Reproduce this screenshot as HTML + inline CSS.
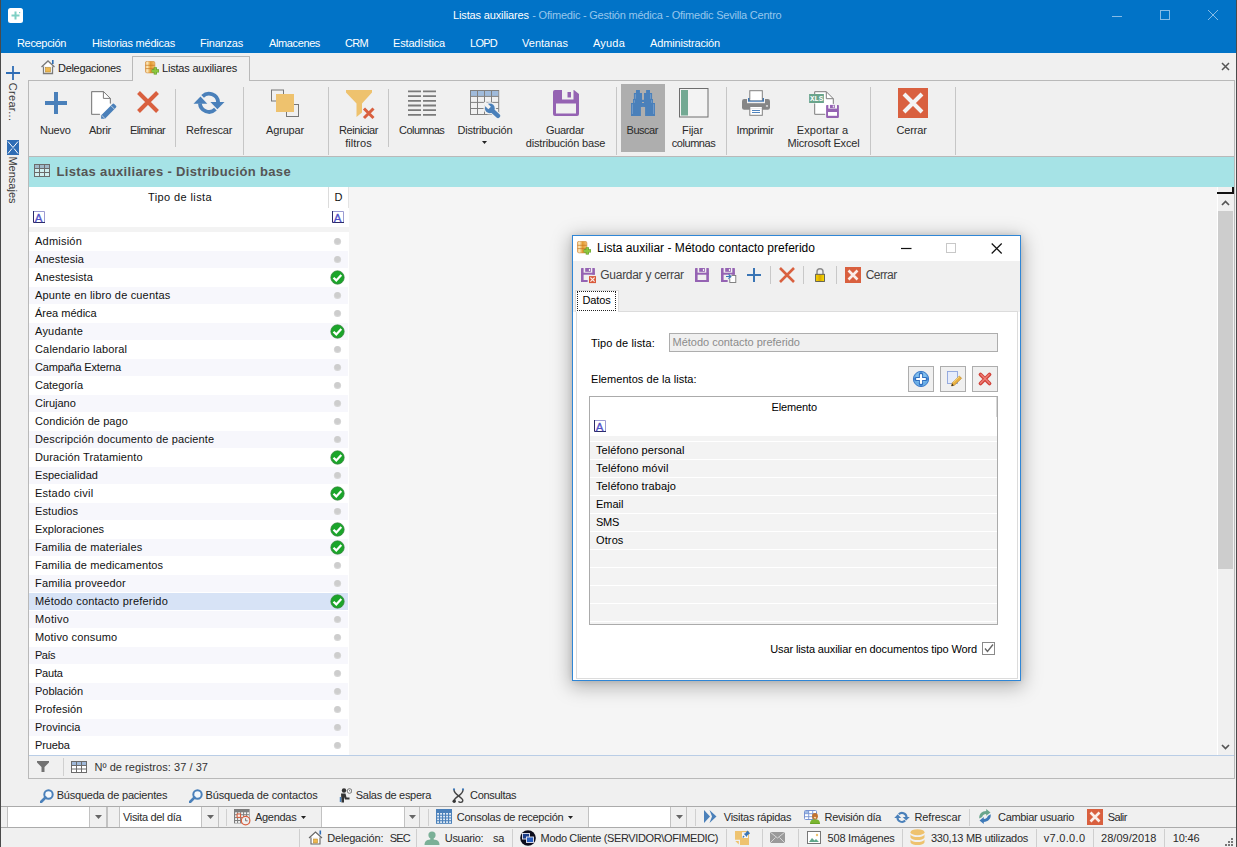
<!DOCTYPE html>
<html lang="es"><head><meta charset="utf-8"><title>Listas auxiliares - Ofimedic</title>
<style>
html,body{margin:0;padding:0}
body{width:1237px;height:847px;overflow:hidden;position:relative;background:#f0f0f0;font-family:"Liberation Sans",sans-serif;font-size:11px}
body div,body span.t,body svg{position:absolute;box-sizing:border-box}
.t{white-space:nowrap}
.dv{font-family:"DejaVu Sans","Liberation Sans",sans-serif}
.dvc{font-family:"DejaVu Sans Condensed","DejaVu Sans","Liberation Sans",sans-serif}
</style></head>
<body>
<div style="left:0px;top:0px;width:1237px;height:53px;background:#0173C7"></div>
<svg style="left:8px;top:8px;" width="15" height="15" viewBox="0 0 15 15"><rect x="0" y="0" width="15" height="15" rx="2.5" fill="#fff"/><path d="M7.500 3.500v8M3.500 7.500h8" stroke="#7fcfc4" stroke-width="2"/><rect x="11" y="4" width="1.200" height="1.200" fill="#7fcfc4"/></svg>
<span id="t1" class="t " style="top:7px;font-size:11px;color:#fff;line-height:16px;left:453px;letter-spacing:-0.145px;">Listas auxiliares</span>
<span id="t2" class="t " style="top:7px;font-size:11px;color:#96c6ec;line-height:16px;left:532.3px;letter-spacing:-0.223px;">- Ofimedic - Gestión médica - Ofimedic Sevilla Centro</span>
<svg style="left:1112px;top:10px;" width="10" height="12" viewBox="0 0 10 12"><path d="M0 6.500h10" stroke="#86bbe6" stroke-width="1"/></svg>
<svg style="left:1160px;top:10px;" width="10" height="10" viewBox="0 0 10 10"><rect x="0.500" y="0.500" width="9" height="9" fill="none" stroke="#86bbe6" stroke-width="1"/></svg>
<svg style="left:1208px;top:10px;" width="10" height="10" viewBox="0 0 10 10"><path d="M0 0l10 10M10 0l-10 10" stroke="#86bbe6" stroke-width="1"/></svg>
<span id="t3" class="t " style="top:35px;font-size:11px;color:#fff;line-height:16px;left:17px;letter-spacing:-0.332px;">Recepción</span>
<span id="t4" class="t " style="top:35px;font-size:11px;color:#fff;line-height:16px;left:92px;letter-spacing:-0.224px;">Historias médicas</span>
<span id="t5" class="t " style="top:35px;font-size:11px;color:#fff;line-height:16px;left:200px;letter-spacing:-0.205px;">Finanzas</span>
<span id="t6" class="t " style="top:35px;font-size:11px;color:#fff;line-height:16px;left:269px;letter-spacing:-0.380px;">Almacenes</span>
<span id="t7" class="t " style="top:35px;font-size:11px;color:#fff;line-height:16px;left:345px;letter-spacing:-0.688px;">CRM</span>
<span id="t8" class="t " style="top:35px;font-size:11px;color:#fff;line-height:16px;left:393px;letter-spacing:-0.165px;">Estadística</span>
<span id="t9" class="t " style="top:35px;font-size:11px;color:#fff;line-height:16px;left:470px;letter-spacing:-0.742px;">LOPD</span>
<span id="t10" class="t " style="top:35px;font-size:11px;color:#fff;line-height:16px;left:522px;letter-spacing:0.016px;">Ventanas</span>
<span id="t11" class="t " style="top:35px;font-size:11px;color:#fff;line-height:16px;left:593px;letter-spacing:0.200px;">Ayuda</span>
<span id="t12" class="t " style="top:35px;font-size:11px;color:#fff;line-height:16px;left:650px;letter-spacing:-0.153px;">Administración</span>
<div style="left:0px;top:0px;width:1px;height:847px;background:#4a4a4a"></div>
<div style="left:1236px;top:0px;width:1px;height:847px;background:#4a4a4a"></div>
<svg style="left:6px;top:66px;" width="14" height="14" viewBox="0 0 14 14"><path d="M7 0v14M0 7h14" stroke="#2f6db5" stroke-width="1.800"/></svg>
<span class="t" style="left:13px;top:101.500px;font-size:11px;color:#3a3a3a;line-height:14px;transform:translate(-50%,-50%) rotate(90deg);letter-spacing:0.3px">Crear...</span>
<svg style="left:7px;top:140px;" width="12" height="15" viewBox="0 0 12 15"><rect width="12" height="15" fill="#2f6db5"/><path d="M1 1.5l5 6 5-6M1 13.5l4-5M11 13.5l-4-5" stroke="#fff" stroke-width="1" fill="none"/></svg>
<span class="t" style="left:13px;top:180.300px;font-size:11px;color:#3a3a3a;line-height:14px;transform:translate(-50%,-50%) rotate(90deg);letter-spacing:0px">Mensajes</span>
<div style="left:28px;top:80px;width:1207px;height:76px;border:1px solid #b9b9b9;border-bottom:none;background:#f0f0f0"></div>
<div style="left:132px;top:56px;width:118px;height:25px;border:1px solid #b9b9b9;border-bottom:none;background:#f0f0f0"></div>
<svg style="left:40px;top:59px;" width="16" height="16" viewBox="0 0 16 16"><path d="M1.5 8L8 2l6.5 6M3.5 7.5v7h9v-7" fill="#fff" stroke="#7a7a7a" stroke-width="1.300"/><rect x="5.500" y="8.500" width="5" height="4.500" fill="#f0b84f" stroke="#b88a2f" stroke-width="0.6"/><rect x="12" y="1" width="1.6" height="4" fill="#2f6db5"/></svg>
<span id="t13" class="t " style="top:60px;font-size:11px;color:#222;line-height:16px;left:58px;letter-spacing:-0.305px;">Delegaciones</span>
<svg style="left:145px;top:61px;" width="15" height="14" viewBox="0 0 15 14"><defs><linearGradient id="gdb2" x1="0" x2="1" y1="0" y2="0"><stop offset="0" stop-color="#e9a04a"/><stop offset="0.180" stop-color="#fdf0c8"/><stop offset="0.550" stop-color="#e49a30"/><stop offset="1" stop-color="#f3c070"/></linearGradient></defs><rect x="0.300" y="0.300" width="9.600" height="11.600" rx="1.800" fill="url(#gdb2)" stroke="#d08a3a" stroke-width="0.600"/><path d="M0.500 4.300h9.200M0.500 7.600h9.200" stroke="#c87a28" stroke-width="0.900" opacity="0.800"/><path d="M10.300 6.200v7.400M6.600 9.900h7.400" stroke="#5e9a28" stroke-width="3.200"/><path d="M10.300 6.600v6.600M7 9.900h6.600" stroke="#8cc63e" stroke-width="2"/></svg>
<span id="t14" class="t " style="top:60px;font-size:11px;color:#222;line-height:16px;left:162px;letter-spacing:-0.192px;">Listas auxiliares</span>
<svg style="left:1221px;top:62px;" width="9" height="9" viewBox="0 0 9 9"><path d="M1 1l7 7M8 1l-7 7" stroke="#555" stroke-width="1.500"/></svg>
<div style="left:243px;top:87px;width:1px;height:68px;background:#c6c6c6"></div>
<div style="left:328px;top:87px;width:1px;height:68px;background:#c6c6c6"></div>
<div style="left:616px;top:87px;width:1px;height:68px;background:#c6c6c6"></div>
<div style="left:726px;top:87px;width:1px;height:68px;background:#c6c6c6"></div>
<div style="left:870px;top:87px;width:1px;height:68px;background:#c6c6c6"></div>
<div style="left:955px;top:87px;width:1px;height:68px;background:#c6c6c6"></div>
<div style="left:175px;top:89px;width:1px;height:58px;background:#c6c6c6"></div>
<div style="left:388px;top:89px;width:1px;height:58px;background:#c6c6c6"></div>
<svg style="left:45px;top:92px;" width="22" height="22" viewBox="0 0 22 22"><path d="M11 0v22M0 11h22" stroke="#4a80ba" stroke-width="4"/></svg>
<span id="t15" class="t " style="top:122px;font-size:11px;color:#2b2b2b;line-height:16px;left:40px;letter-spacing:-0.259px;">Nuevo</span>
<svg style="left:90px;top:90px;" width="28" height="30" viewBox="0 0 28 30"><path d="M20.300 13.500v-5.100l-6.700-6.700h-11.900v22.600h8.200" fill="#fff" stroke="#7d7d7d" stroke-width="1"/><path d="M1.700 1.700h11.900l6.700 6.700v10l-6 6h-12.600z" fill="#fff"/><path d="M20.300 13.500v-5.100l-6.700-6.700h-11.900v22.600h8.200" fill="none" stroke="#7d7d7d" stroke-width="1"/><path d="M13.400 1.700v6.700h6.900" fill="none" stroke="#7d7d7d" stroke-width="1"/><path d="M11.100 28.700l.1-3.500 11.300-11.200a1.200 1.200 0 0 1 1.700 0l1.800 1.800a1.200 1.200 0 0 1 0 1.700l-11 11.200z" fill="#4a80ba"/><path d="M11.700 25.300l3.400 3.400M21 15.700l3.400 3.400" stroke="#f0f0f0" stroke-width="0.700"/></svg>
<span id="t16" class="t " style="top:122px;font-size:11px;color:#2b2b2b;line-height:16px;left:89px;letter-spacing:-0.247px;">Abrir</span>
<svg style="left:137px;top:91px;" width="22" height="22" viewBox="0 0 22 22"><path d="M1.500 1.500l19 19M20.500 1.500l-19 19" stroke="#d9603f" stroke-width="4"/></svg>
<span id="t17" class="t " style="top:122px;font-size:11px;color:#2b2b2b;line-height:16px;left:130px;letter-spacing:-0.592px;">Eliminar</span>
<svg style="left:193px;top:90px;" width="32" height="26" viewBox="0 0 32 26"><g fill="none" stroke="#4a80ba" stroke-width="3.800"><path d="M9.600 6.400A9.100 9.100 0 0 1 25.100 12.200"/><path d="M6.900 13.400A9.100 9.100 0 0 0 22.400 19.200"/></g><path d="M0.500 13.800h13.800l-6.800-7.200z" fill="#4a80ba"/><path d="M17.400 12.100h14.100l-7.100 7.100z" fill="#4a80ba"/></svg>
<span id="t18" class="t " style="top:122px;font-size:11px;color:#2b2b2b;line-height:16px;left:186px;letter-spacing:-0.154px;">Refrescar</span>
<svg style="left:270px;top:89px;" width="30" height="29" viewBox="0 0 30 29"><rect x="1.500" y="1" width="12" height="11" fill="#f0f0f0" stroke="#777" stroke-width="1"/><rect x="16.500" y="15.500" width="12" height="12" fill="#f0f0f0" stroke="#777" stroke-width="1"/><rect x="6" y="5" width="18" height="18" fill="#eec26e"/></svg>
<span id="t19" class="t " style="top:122px;font-size:11px;color:#2b2b2b;line-height:16px;left:266px;letter-spacing:-0.163px;">Agrupar</span>
<svg style="left:345px;top:89px;" width="31" height="31" viewBox="0 0 31 31"><path d="M1 1h26v2.500l-10 11v9l-5.500 4.500v-13.500l-10.500-11z" fill="#eec26e"/><path d="M19 19.500l9.500 9.500M28.500 19.500l-9.500 9.500" stroke="#d9603f" stroke-width="3"/></svg>
<span id="t20" class="t " style="top:122px;font-size:11px;color:#2b2b2b;line-height:16px;left:358.5px;transform:translateX(-50%);letter-spacing:-0.422px;">Reiniciar</span>
<span id="t21" class="t " style="top:135px;font-size:11px;color:#2b2b2b;line-height:16px;left:358.5px;transform:translateX(-50%);letter-spacing:0.031px;">filtros</span>
<svg style="left:408px;top:90px;" width="28" height="27" viewBox="0 0 28 27"><path d="M0 1.4h13M15 1.4h13" stroke="#7a7a7a" stroke-width="1.800"/><path d="M0 6.1h13M15 6.1h13" stroke="#7a7a7a" stroke-width="1.800"/><path d="M0 10.8h13M15 10.8h13" stroke="#7a7a7a" stroke-width="1.800"/><path d="M0 15.5h13M15 15.5h13" stroke="#7a7a7a" stroke-width="1.800"/><path d="M0 20.2h13M15 20.2h13" stroke="#7a7a7a" stroke-width="1.800"/><path d="M0 24.9h13M15 24.9h13" stroke="#7a7a7a" stroke-width="1.800"/></svg>
<span id="t22" class="t " style="top:122px;font-size:11px;color:#2b2b2b;line-height:16px;left:399px;letter-spacing:-0.529px;">Columnas</span>
<svg style="left:470px;top:90px;" width="31" height="30" viewBox="0 0 31 30"><rect x="0.500" y="0.500" width="28.200" height="24" fill="#f1f1f1" stroke="#808080"/><rect x="1" y="1" width="27.200" height="5" fill="#a0bbdb"/><path d="M7.5 0.500v24" stroke="#808080" stroke-width="1"/><path d="M14.5 0.500v24" stroke="#808080" stroke-width="1"/><path d="M21.5 0.500v24" stroke="#808080" stroke-width="1"/><path d="M0.500 6.4h28.200" stroke="#808080" stroke-width="1"/><path d="M0.500 12.4h28.200" stroke="#808080" stroke-width="1"/><path d="M0.500 18.5h28.200" stroke="#808080" stroke-width="1"/><circle cx="19.800" cy="18.300" r="6.300" fill="#f1f1f1" opacity="0.900"/><path d="M20.500 19l7.500 6.800" stroke="#f1f1f1" stroke-width="6.400" stroke-linecap="round"/><circle cx="19.800" cy="18.300" r="4.900" fill="#4a80ba"/><path d="M20.500 19l7.500 6.800" stroke="#4a80ba" stroke-width="4.400" stroke-linecap="round"/><path d="M19.600 18.100l-5.500-5.500" stroke="#f1f1f1" stroke-width="3.600"/></svg>
<span id="t23" class="t " style="top:122px;font-size:11px;color:#2b2b2b;line-height:16px;left:457.5px;letter-spacing:-0.222px;">Distribución</span>
<svg style="left:482px;top:141px;" width="5" height="3" viewBox="0 0 5 3"><path d="M0 0h5l-2.500 3z" fill="#222"/></svg>
<svg style="left:553px;top:90px;" width="26" height="26" viewBox="0 0 26 26"><path d="M2 0h19l5 4v20a2 2 0 0 1-2 2h-22a2 2 0 0 1-2-2v-22a2 2 0 0 1 2-2z" fill="#9563b3"/><rect x="9" y="0" width="11.500" height="9.500" fill="#f0f0f0"/><rect x="9" y="0" width="5" height="9.500" fill="#9563b3" opacity="0"/><rect x="14.500" y="2" width="3.500" height="5.500" fill="#9563b3"/><rect x="3" y="13.500" width="20" height="10" fill="#f0f0f0"/></svg>
<span id="t24" class="t " style="top:122px;font-size:11px;color:#2b2b2b;line-height:16px;left:565px;transform:translateX(-50%);letter-spacing:-0.337px;">Guardar</span>
<span id="t25" class="t " style="top:135px;font-size:11px;color:#2b2b2b;line-height:16px;left:565.5px;transform:translateX(-50%);letter-spacing:-0.192px;">distribución base</span>
<div style="left:621px;top:84px;width:44px;height:68px;background:#aeaeae"></div>
<svg style="left:631px;top:90px;" width="24" height="26" viewBox="0 0 24 26"><g fill="#4a80ba"><path d="M5 0h3.900v3h2.100v14h-1.100v9h-9.900v-13.100h2v-3.900h.9v-6h2.100z"/><path d="M19 0h-3.900v3h-2.100v14h1.100v9h9.900v-13.100h-2v-3.900h-.9v-6h-2.100z"/><rect x="10.500" y="9.800" width="3" height="7.100"/></g><rect x="11" y="12" width="2" height="1" fill="#aeaeae"/><g stroke="#86a9d0" stroke-width="0.700"><path d="M4.400 4.200v4.600M3.400 10.200v2.600M1.400 14.200v9.800M19.600 4.200v4.600M20.600 10.200v2.600M22.600 14.200v9.800"/></g></svg>
<span id="t26" class="t " style="top:122px;font-size:11px;color:#2b2b2b;line-height:16px;left:626.5px;letter-spacing:-0.458px;">Buscar</span>
<svg style="left:679px;top:88px;" width="30" height="30" viewBox="0 0 30 30"><rect x="0.500" y="0.500" width="28.500" height="28.500" fill="#f3f3f3" stroke="#6e6e6e"/><rect x="2" y="2" width="7" height="25.500" fill="#73a993"/></svg>
<span id="t27" class="t " style="top:122px;font-size:11px;color:#2b2b2b;line-height:16px;left:692.5px;transform:translateX(-50%);letter-spacing:-0.078px;">Fijar</span>
<span id="t28" class="t " style="top:135px;font-size:11px;color:#2b2b2b;line-height:16px;left:693.5px;transform:translateX(-50%);letter-spacing:-0.460px;">columnas</span>
<svg style="left:742px;top:90px;" width="28" height="27" viewBox="0 0 28 27"><rect x="0" y="9" width="28" height="10.800" rx="2.200" fill="#868686"/><rect x="5" y="8" width="18" height="5.200" fill="#f0f0f0"/><rect x="6" y="8" width="16" height="3.700" fill="#3d76b6"/><rect x="7.800" y="0.700" width="12.500" height="9.300" fill="#fff" stroke="#808080"/><rect x="8.300" y="9" width="11.500" height="1.300" fill="#fff"/><rect x="7.800" y="17.700" width="12.500" height="7.600" fill="#fff" stroke="#808080"/><rect x="8.300" y="17" width="11.500" height="1.200" fill="#fff"/><path d="M10 20.500h8M10 22.500h8" stroke="#3d76b6" stroke-width="0.900"/><rect x="23.900" y="15.400" width="2.100" height="1.100" fill="#fff"/></svg>
<span id="t29" class="t " style="top:122px;font-size:11px;color:#2b2b2b;line-height:16px;left:736.5px;letter-spacing:-0.340px;">Imprimir</span>
<svg style="left:808px;top:89px;" width="32" height="30" viewBox="0 0 32 30"><path d="M6.700 2.700h11.600l7 7v15.600h-18.600z" fill="#fff"/><path d="M6.700 5v-2.300h11.600l7 7v5.200M6.700 14.500v10.800h10.500M18.300 2.700v7h7" fill="none" stroke="#7d7d7d"/><rect x="1.100" y="5" width="14.800" height="9" fill="#6aa58c"/><text x="8.500" y="12.300" font-size="7.600" font-weight="bold" fill="#fff" text-anchor="middle" font-family="Liberation Mono,monospace" letter-spacing="-0.2">XLS</text><rect x="18.100" y="15.900" width="12.800" height="13" rx="0.800" fill="#9563b3"/><rect x="20.300" y="15.900" width="8.700" height="3.700" fill="#f6f6f6"/><rect x="22" y="15.900" width="4.800" height="3.200" fill="#9563b3"/><rect x="24.800" y="16.500" width="1.100" height="2" fill="#f6f6f6"/><rect x="20" y="23" width="9" height="3.800" fill="#fff"/></svg>
<span id="t30" class="t " style="top:122px;font-size:11px;color:#2b2b2b;line-height:16px;left:822.5px;transform:translateX(-50%);letter-spacing:0.055px;">Exportar a</span>
<span id="t31" class="t " style="top:135px;font-size:11px;color:#2b2b2b;line-height:16px;left:823.5px;transform:translateX(-50%);letter-spacing:-0.172px;">Microsoft Excel</span>
<svg style="left:898px;top:88px;" width="30" height="30" viewBox="0 0 30 30"><rect width="30" height="30" fill="#d9603f"/><path d="M6 6l18 18M24 6l-18 18" stroke="#f4f4f4" stroke-width="4"/></svg>
<span id="t32" class="t " style="top:122px;font-size:11px;color:#2b2b2b;line-height:16px;left:896.5px;letter-spacing:-0.129px;">Cerrar</span>
<div style="left:29px;top:156px;width:1206px;height:31px;background:#a6e3e6"></div>
<div style="left:29px;top:156px;width:1206px;height:1px;background:#b9b9b9"></div>
<svg style="left:34px;top:164px;" width="16" height="13" viewBox="0 0 16 13"><rect x="0.500" y="0.500" width="15" height="12" fill="#cfeff0" stroke="#6b6b6b"/><rect x="1" y="1" width="14" height="3" fill="#9fb8c8"/><path d="M0.500 4.500h15M0.500 8.500h15M5.500 0.500v12M10.500 0.500v12" stroke="#6b6b6b" stroke-width="1"/></svg>
<span id="t33" class="t " style="top:163.5px;font-size:13px;color:#555;line-height:16px;left:56.5px;letter-spacing:0.343px;font-weight:bold">Listas auxiliares - Distribución base</span>
<div style="left:29px;top:187px;width:1206px;height:569px;background:#f5f5f5"></div>
<div style="left:29px;top:187px;width:320px;height:40px;background:#fff"></div>
<div style="left:328px;top:187px;width:1px;height:21px;background:#dcdcdc"></div>
<div style="left:348px;top:187px;width:1px;height:21px;background:#e4e4e4"></div>
<div style="left:29px;top:227px;width:320px;height:5px;background:#f3f3f3"></div>
<span id="t34" class="t " style="top:189px;font-size:11px;color:#111;line-height:16px;left:180px;transform:translateX(-50%);letter-spacing:0.392px;">Tipo de lista</span>
<span id="t35" class="t " style="top:189px;font-size:11px;color:#111;line-height:16px;left:338.5px;transform:translateX(-50%);">D</span>
<svg style="left:33px;top:211px;" width="12" height="12" viewBox="0 0 12 12"><rect x="0" y="0" width="12" height="12" fill="#fff"/><path d="M0.500 0v11.500h11.500" fill="none" stroke="#2a2a68" stroke-width="1"/><path d="M1 0.500h10.500v10.500" fill="none" stroke="#9c9cd2" stroke-width="1"/><text x="5.700" y="10.800" font-size="11.500" fill="#5050c8" stroke="#5050c8" stroke-width="0.300" text-anchor="middle" font-family="Liberation Sans,sans-serif">A</text></svg>
<svg style="left:332px;top:211px;" width="12" height="12" viewBox="0 0 12 12"><rect x="0" y="0" width="12" height="12" fill="#fff"/><path d="M0.500 0v11.500h11.500" fill="none" stroke="#2a2a68" stroke-width="1"/><path d="M1 0.500h10.500v10.500" fill="none" stroke="#9c9cd2" stroke-width="1"/><text x="5.700" y="10.800" font-size="11.500" fill="#5050c8" stroke="#5050c8" stroke-width="0.300" text-anchor="middle" font-family="Liberation Sans,sans-serif">A</text></svg>
<div style="left:29px;top:232px;width:320px;height:18px;background:#fff"></div>
<span id="t36" class="t " style="top:233px;font-size:11px;color:#111;line-height:16px;left:35px;letter-spacing:0.219px;">Admisión</span>
<svg style="left:333px;top:237px;" width="9" height="9" viewBox="0 0 9 9"><circle cx="4.500" cy="4.500" r="3.600" fill="#d6d6d6"/><circle cx="4.500" cy="4" r="2.800" fill="#cdcdcd"/></svg>
<div style="left:29px;top:250px;width:320px;height:18px;background:#fff"></div>
<div style="left:29px;top:251px;width:319px;height:17px;background:#f7f7fc"></div>
<span id="t37" class="t " style="top:251px;font-size:11px;color:#111;line-height:16px;left:35px;letter-spacing:0.076px;">Anestesia</span>
<svg style="left:333px;top:255px;" width="9" height="9" viewBox="0 0 9 9"><circle cx="4.500" cy="4.500" r="3.600" fill="#d6d6d6"/><circle cx="4.500" cy="4" r="2.800" fill="#cdcdcd"/></svg>
<div style="left:29px;top:268px;width:320px;height:18px;background:#fff"></div>
<span id="t38" class="t " style="top:269px;font-size:11px;color:#111;line-height:16px;left:35px;letter-spacing:0.102px;">Anestesista</span>
<svg style="left:330px;top:270px;" width="15" height="15" viewBox="0 0 15 15"><circle cx="7.500" cy="7.500" r="6.700" fill="#1ba52a" stroke="#3a8240" stroke-width="0.700"/><path d="M3.500 7.700l2.800 2.700 5-5.500" fill="none" stroke="#fff" stroke-width="2.200"/></svg>
<div style="left:29px;top:286px;width:320px;height:18px;background:#fff"></div>
<div style="left:29px;top:287px;width:319px;height:17px;background:#f7f7fc"></div>
<span id="t39" class="t " style="top:287px;font-size:11px;color:#111;line-height:16px;left:35px;letter-spacing:0.174px;">Apunte en libro de cuentas</span>
<svg style="left:333px;top:291px;" width="9" height="9" viewBox="0 0 9 9"><circle cx="4.500" cy="4.500" r="3.600" fill="#d6d6d6"/><circle cx="4.500" cy="4" r="2.800" fill="#cdcdcd"/></svg>
<div style="left:29px;top:304px;width:320px;height:18px;background:#fff"></div>
<span id="t40" class="t " style="top:305px;font-size:11px;color:#111;line-height:16px;left:35px;letter-spacing:-0.006px;">Área médica</span>
<svg style="left:333px;top:309px;" width="9" height="9" viewBox="0 0 9 9"><circle cx="4.500" cy="4.500" r="3.600" fill="#d6d6d6"/><circle cx="4.500" cy="4" r="2.800" fill="#cdcdcd"/></svg>
<div style="left:29px;top:322px;width:320px;height:18px;background:#fff"></div>
<div style="left:29px;top:323px;width:319px;height:17px;background:#f7f7fc"></div>
<span id="t41" class="t " style="top:323px;font-size:11px;color:#111;line-height:16px;left:35px;letter-spacing:0.238px;">Ayudante</span>
<svg style="left:330px;top:324px;" width="15" height="15" viewBox="0 0 15 15"><circle cx="7.500" cy="7.500" r="6.700" fill="#1ba52a" stroke="#3a8240" stroke-width="0.700"/><path d="M3.500 7.700l2.800 2.700 5-5.500" fill="none" stroke="#fff" stroke-width="2.200"/></svg>
<div style="left:29px;top:340px;width:320px;height:18px;background:#fff"></div>
<span id="t42" class="t " style="top:341px;font-size:11px;color:#111;line-height:16px;left:35px;letter-spacing:0.162px;">Calendario laboral</span>
<svg style="left:333px;top:345px;" width="9" height="9" viewBox="0 0 9 9"><circle cx="4.500" cy="4.500" r="3.600" fill="#d6d6d6"/><circle cx="4.500" cy="4" r="2.800" fill="#cdcdcd"/></svg>
<div style="left:29px;top:358px;width:320px;height:18px;background:#fff"></div>
<div style="left:29px;top:359px;width:319px;height:17px;background:#f7f7fc"></div>
<span id="t43" class="t " style="top:359px;font-size:11px;color:#111;line-height:16px;left:35px;letter-spacing:-0.178px;">Campaña Externa</span>
<svg style="left:333px;top:363px;" width="9" height="9" viewBox="0 0 9 9"><circle cx="4.500" cy="4.500" r="3.600" fill="#d6d6d6"/><circle cx="4.500" cy="4" r="2.800" fill="#cdcdcd"/></svg>
<div style="left:29px;top:376px;width:320px;height:18px;background:#fff"></div>
<span id="t44" class="t " style="top:377px;font-size:11px;color:#111;line-height:16px;left:35px;letter-spacing:-0.012px;">Categoría</span>
<svg style="left:333px;top:381px;" width="9" height="9" viewBox="0 0 9 9"><circle cx="4.500" cy="4.500" r="3.600" fill="#d6d6d6"/><circle cx="4.500" cy="4" r="2.800" fill="#cdcdcd"/></svg>
<div style="left:29px;top:394px;width:320px;height:18px;background:#fff"></div>
<div style="left:29px;top:395px;width:319px;height:17px;background:#f7f7fc"></div>
<span id="t45" class="t " style="top:395px;font-size:11px;color:#111;line-height:16px;left:35px;letter-spacing:-0.021px;">Cirujano</span>
<svg style="left:333px;top:399px;" width="9" height="9" viewBox="0 0 9 9"><circle cx="4.500" cy="4.500" r="3.600" fill="#d6d6d6"/><circle cx="4.500" cy="4" r="2.800" fill="#cdcdcd"/></svg>
<div style="left:29px;top:412px;width:320px;height:18px;background:#fff"></div>
<span id="t46" class="t " style="top:413px;font-size:11px;color:#111;line-height:16px;left:35px;letter-spacing:0.068px;">Condición de pago</span>
<svg style="left:333px;top:417px;" width="9" height="9" viewBox="0 0 9 9"><circle cx="4.500" cy="4.500" r="3.600" fill="#d6d6d6"/><circle cx="4.500" cy="4" r="2.800" fill="#cdcdcd"/></svg>
<div style="left:29px;top:430px;width:320px;height:18px;background:#fff"></div>
<div style="left:29px;top:431px;width:319px;height:17px;background:#f7f7fc"></div>
<span id="t47" class="t " style="top:431px;font-size:11px;color:#111;line-height:16px;left:35px;letter-spacing:0.134px;">Descripción documento de paciente</span>
<svg style="left:333px;top:435px;" width="9" height="9" viewBox="0 0 9 9"><circle cx="4.500" cy="4.500" r="3.600" fill="#d6d6d6"/><circle cx="4.500" cy="4" r="2.800" fill="#cdcdcd"/></svg>
<div style="left:29px;top:448px;width:320px;height:18px;background:#fff"></div>
<span id="t48" class="t " style="top:449px;font-size:11px;color:#111;line-height:16px;left:35px;letter-spacing:0.131px;">Duración Tratamiento</span>
<svg style="left:330px;top:450px;" width="15" height="15" viewBox="0 0 15 15"><circle cx="7.500" cy="7.500" r="6.700" fill="#1ba52a" stroke="#3a8240" stroke-width="0.700"/><path d="M3.500 7.700l2.800 2.700 5-5.500" fill="none" stroke="#fff" stroke-width="2.200"/></svg>
<div style="left:29px;top:466px;width:320px;height:18px;background:#fff"></div>
<div style="left:29px;top:467px;width:319px;height:17px;background:#f7f7fc"></div>
<span id="t49" class="t " style="top:467px;font-size:11px;color:#111;line-height:16px;left:35px;letter-spacing:0.052px;">Especialidad</span>
<svg style="left:333px;top:471px;" width="9" height="9" viewBox="0 0 9 9"><circle cx="4.500" cy="4.500" r="3.600" fill="#d6d6d6"/><circle cx="4.500" cy="4" r="2.800" fill="#cdcdcd"/></svg>
<div style="left:29px;top:484px;width:320px;height:18px;background:#fff"></div>
<span id="t50" class="t " style="top:485px;font-size:11px;color:#111;line-height:16px;left:35px;letter-spacing:0.222px;">Estado civil</span>
<svg style="left:330px;top:486px;" width="15" height="15" viewBox="0 0 15 15"><circle cx="7.500" cy="7.500" r="6.700" fill="#1ba52a" stroke="#3a8240" stroke-width="0.700"/><path d="M3.500 7.700l2.800 2.700 5-5.500" fill="none" stroke="#fff" stroke-width="2.200"/></svg>
<div style="left:29px;top:502px;width:320px;height:18px;background:#fff"></div>
<div style="left:29px;top:503px;width:319px;height:17px;background:#f7f7fc"></div>
<span id="t51" class="t " style="top:503px;font-size:11px;color:#111;line-height:16px;left:35px;letter-spacing:0.125px;">Estudios</span>
<svg style="left:333px;top:507px;" width="9" height="9" viewBox="0 0 9 9"><circle cx="4.500" cy="4.500" r="3.600" fill="#d6d6d6"/><circle cx="4.500" cy="4" r="2.800" fill="#cdcdcd"/></svg>
<div style="left:29px;top:520px;width:320px;height:18px;background:#fff"></div>
<span id="t52" class="t " style="top:521px;font-size:11px;color:#111;line-height:16px;left:35px;letter-spacing:-0.007px;">Exploraciones</span>
<svg style="left:330px;top:522px;" width="15" height="15" viewBox="0 0 15 15"><circle cx="7.500" cy="7.500" r="6.700" fill="#1ba52a" stroke="#3a8240" stroke-width="0.700"/><path d="M3.500 7.700l2.800 2.700 5-5.500" fill="none" stroke="#fff" stroke-width="2.200"/></svg>
<div style="left:29px;top:538px;width:320px;height:18px;background:#fff"></div>
<div style="left:29px;top:539px;width:319px;height:17px;background:#f7f7fc"></div>
<span id="t53" class="t " style="top:539px;font-size:11px;color:#111;line-height:16px;left:35px;letter-spacing:0.131px;">Familia de materiales</span>
<svg style="left:330px;top:540px;" width="15" height="15" viewBox="0 0 15 15"><circle cx="7.500" cy="7.500" r="6.700" fill="#1ba52a" stroke="#3a8240" stroke-width="0.700"/><path d="M3.500 7.700l2.800 2.700 5-5.500" fill="none" stroke="#fff" stroke-width="2.200"/></svg>
<div style="left:29px;top:556px;width:320px;height:18px;background:#fff"></div>
<span id="t54" class="t " style="top:557px;font-size:11px;color:#111;line-height:16px;left:35px;letter-spacing:0.124px;">Familia de medicamentos</span>
<svg style="left:333px;top:561px;" width="9" height="9" viewBox="0 0 9 9"><circle cx="4.500" cy="4.500" r="3.600" fill="#d6d6d6"/><circle cx="4.500" cy="4" r="2.800" fill="#cdcdcd"/></svg>
<div style="left:29px;top:574px;width:320px;height:18px;background:#fff"></div>
<div style="left:29px;top:575px;width:319px;height:17px;background:#f7f7fc"></div>
<span id="t55" class="t " style="top:575px;font-size:11px;color:#111;line-height:16px;left:35px;letter-spacing:0.162px;">Familia proveedor</span>
<svg style="left:333px;top:579px;" width="9" height="9" viewBox="0 0 9 9"><circle cx="4.500" cy="4.500" r="3.600" fill="#d6d6d6"/><circle cx="4.500" cy="4" r="2.800" fill="#cdcdcd"/></svg>
<div style="left:29px;top:592px;width:320px;height:18px;background:#fff"></div>
<div style="left:29px;top:593px;width:319px;height:17px;background:#d7e3f6"></div>
<span id="t56" class="t " style="top:593px;font-size:11px;color:#111;line-height:16px;left:35px;letter-spacing:0.207px;">Método contacto preferido</span>
<svg style="left:330px;top:594px;" width="15" height="15" viewBox="0 0 15 15"><circle cx="7.500" cy="7.500" r="6.700" fill="#1ba52a" stroke="#3a8240" stroke-width="0.700"/><path d="M3.500 7.700l2.800 2.700 5-5.500" fill="none" stroke="#fff" stroke-width="2.200"/></svg>
<div style="left:29px;top:610px;width:320px;height:18px;background:#fff"></div>
<div style="left:29px;top:611px;width:319px;height:17px;background:#f7f7fc"></div>
<span id="t57" class="t " style="top:611px;font-size:11px;color:#111;line-height:16px;left:35px;letter-spacing:0.316px;">Motivo</span>
<svg style="left:333px;top:615px;" width="9" height="9" viewBox="0 0 9 9"><circle cx="4.500" cy="4.500" r="3.600" fill="#d6d6d6"/><circle cx="4.500" cy="4" r="2.800" fill="#cdcdcd"/></svg>
<div style="left:29px;top:628px;width:320px;height:18px;background:#fff"></div>
<span id="t58" class="t " style="top:629px;font-size:11px;color:#111;line-height:16px;left:35px;letter-spacing:0.158px;">Motivo consumo</span>
<svg style="left:333px;top:633px;" width="9" height="9" viewBox="0 0 9 9"><circle cx="4.500" cy="4.500" r="3.600" fill="#d6d6d6"/><circle cx="4.500" cy="4" r="2.800" fill="#cdcdcd"/></svg>
<div style="left:29px;top:646px;width:320px;height:18px;background:#fff"></div>
<div style="left:29px;top:647px;width:319px;height:17px;background:#f7f7fc"></div>
<span id="t59" class="t " style="top:647px;font-size:11px;color:#111;line-height:16px;left:35px;letter-spacing:-0.504px;">País</span>
<svg style="left:333px;top:651px;" width="9" height="9" viewBox="0 0 9 9"><circle cx="4.500" cy="4.500" r="3.600" fill="#d6d6d6"/><circle cx="4.500" cy="4" r="2.800" fill="#cdcdcd"/></svg>
<div style="left:29px;top:664px;width:320px;height:18px;background:#fff"></div>
<span id="t60" class="t " style="top:665px;font-size:11px;color:#111;line-height:16px;left:35px;letter-spacing:-0.230px;">Pauta</span>
<svg style="left:333px;top:669px;" width="9" height="9" viewBox="0 0 9 9"><circle cx="4.500" cy="4.500" r="3.600" fill="#d6d6d6"/><circle cx="4.500" cy="4" r="2.800" fill="#cdcdcd"/></svg>
<div style="left:29px;top:682px;width:320px;height:18px;background:#fff"></div>
<div style="left:29px;top:683px;width:319px;height:17px;background:#f7f7fc"></div>
<span id="t61" class="t " style="top:683px;font-size:11px;color:#111;line-height:16px;left:35px;letter-spacing:-0.036px;">Población</span>
<svg style="left:333px;top:687px;" width="9" height="9" viewBox="0 0 9 9"><circle cx="4.500" cy="4.500" r="3.600" fill="#d6d6d6"/><circle cx="4.500" cy="4" r="2.800" fill="#cdcdcd"/></svg>
<div style="left:29px;top:700px;width:320px;height:18px;background:#fff"></div>
<span id="t62" class="t " style="top:701px;font-size:11px;color:#111;line-height:16px;left:35px;letter-spacing:0.124px;">Profesión</span>
<svg style="left:333px;top:705px;" width="9" height="9" viewBox="0 0 9 9"><circle cx="4.500" cy="4.500" r="3.600" fill="#d6d6d6"/><circle cx="4.500" cy="4" r="2.800" fill="#cdcdcd"/></svg>
<div style="left:29px;top:718px;width:320px;height:18px;background:#fff"></div>
<div style="left:29px;top:719px;width:319px;height:17px;background:#f7f7fc"></div>
<span id="t63" class="t " style="top:719px;font-size:11px;color:#111;line-height:16px;left:35px;letter-spacing:0.017px;">Provincia</span>
<svg style="left:333px;top:723px;" width="9" height="9" viewBox="0 0 9 9"><circle cx="4.500" cy="4.500" r="3.600" fill="#d6d6d6"/><circle cx="4.500" cy="4" r="2.800" fill="#cdcdcd"/></svg>
<div style="left:29px;top:736px;width:320px;height:23px;background:#fff"></div>
<span id="t64" class="t " style="top:737px;font-size:11px;color:#111;line-height:16px;left:35px;letter-spacing:-0.131px;">Prueba</span>
<svg style="left:333px;top:741px;" width="9" height="9" viewBox="0 0 9 9"><circle cx="4.500" cy="4.500" r="3.600" fill="#d6d6d6"/><circle cx="4.500" cy="4" r="2.800" fill="#cdcdcd"/></svg>
<div style="left:1217px;top:187px;width:1px;height:569px;background:#fff"></div>
<div style="left:1218px;top:187px;width:16px;height:569px;background:#f0f0f0"></div>
<div style="left:1217px;top:192px;width:17px;height:2px;background:#111"></div>
<div style="left:1232px;top:187px;width:2px;height:6px;background:#111"></div>
<div style="left:1218px;top:211px;width:15px;height:358px;background:#cdcdcd"></div>
<svg style="left:1221px;top:200px;" width="9" height="6" viewBox="0 0 9 6"><path d="M1 5l3.500-3.500 3.500 3.500" fill="none" stroke="#555" stroke-width="1.700"/></svg>
<svg style="left:1221px;top:744px;" width="9" height="6" viewBox="0 0 9 6"><path d="M1 1l3.500 3.500 3.500-3.500" fill="none" stroke="#555" stroke-width="1.700"/></svg>
<div style="left:1234px;top:80px;width:1px;height:699px;background:#b9b9b9"></div>
<div style="left:28px;top:156px;width:1px;height:623px;background:#b9b9b9"></div>
<div style="left:29px;top:755px;width:1205px;height:1px;background:#b9cde6"></div>
<div style="left:29px;top:756px;width:1205px;height:22px;background:#f0f0f0"></div>
<div style="left:28px;top:778px;width:1207px;height:1px;background:#b9b9b9"></div>
<svg style="left:37px;top:761px;" width="12" height="11" viewBox="0 0 12 11"><path d="M0 0h12v1.500l-4.500 4.500v5h-3v-5l-4.500-4.500z" fill="#727272"/></svg>
<div style="left:63px;top:758px;width:1px;height:18px;background:#d0d0d0"></div>
<svg style="left:71px;top:761px;" width="16" height="12" viewBox="0 0 16 12"><rect x="0.500" y="0.500" width="15" height="11" fill="#fff" stroke="#6b6b6b"/><rect x="1" y="1" width="14" height="3" fill="#9fb8d8"/><path d="M0.500 4.500h15M0.500 8h15M5.500 0.500v11M10.500 0.500v11" stroke="#6b6b6b" stroke-width="1"/></svg>
<span id="t65" class="t " style="top:759px;font-size:11px;color:#333;line-height:16px;left:94.5px;letter-spacing:0.052px;">Nº de registros: 37 / 37</span>
<div style="left:572px;top:235px;width:449px;height:446px;background:#fff;border:1px solid #2f86d6;box-shadow:0 4px 18px 2px rgba(0,0,0,0.28),0 0 6px rgba(0,0,0,0.12)"></div>
<div style="left:573px;top:261px;width:447px;height:51px;background:#f0f0f0"></div>
<svg style="left:577px;top:241px;" width="15" height="14" viewBox="0 0 15 14"><defs><linearGradient id="gdb1" x1="0" x2="1" y1="0" y2="0"><stop offset="0" stop-color="#e9a04a"/><stop offset="0.180" stop-color="#fdf0c8"/><stop offset="0.550" stop-color="#e49a30"/><stop offset="1" stop-color="#f3c070"/></linearGradient></defs><rect x="0.300" y="0.300" width="9.600" height="11.600" rx="1.800" fill="url(#gdb1)" stroke="#d08a3a" stroke-width="0.600"/><path d="M0.500 4.300h9.200M0.500 7.600h9.200" stroke="#c87a28" stroke-width="0.900" opacity="0.800"/><path d="M10.300 6.200v7.400M6.600 9.900h7.400" stroke="#5e9a28" stroke-width="3.200"/><path d="M10.300 6.600v6.600M7 9.900h6.600" stroke="#8cc63e" stroke-width="2"/></svg>
<span id="t66" class="t " style="top:240px;font-size:12px;color:#000;line-height:16px;left:597px;letter-spacing:0.029px;">Lista auxiliar - Método contacto preferido</span>
<svg style="left:901px;top:247px;" width="11" height="3" viewBox="0 0 11 3"><path d="M0 1.500h10.500" stroke="#111" stroke-width="1.200"/></svg>
<svg style="left:946px;top:243px;" width="10" height="10" viewBox="0 0 10 10"><rect x="0.500" y="0.500" width="9" height="9" fill="none" stroke="#c8c8c8"/></svg>
<svg style="left:991px;top:243px;" width="12" height="11" viewBox="0 0 12 11"><path d="M0.700 0.500l10 10M10.700 0.500l-10 10" stroke="#111" stroke-width="1.200"/></svg>
<svg style="left:581px;top:268px;" width="18" height="18" viewBox="0 0 18 18"><g fill="#9563b3"><rect x="0" y="0" width="2.600" height="13.900" rx="0.600"/><rect x="11.300" y="0" width="2.600" height="6.7" rx="0.600"/><rect x="0" y="4.700" width="13.900" height="2"/><rect x="0" y="12.100" width="6.8" height="1.800" rx="0.600"/><rect x="4.200" y="0" width="5.700" height="3.800"/></g><rect x="7.900" y="0.900" width="1.200" height="2.100" fill="#f4f4f4"/><rect x="8" y="8.100" width="7" height="7" fill="#d9593a"/><path d="M9.400 9.500l4.200 4.200M13.600 9.500l-4.200 4.200" stroke="#fbeee9" stroke-width="1.100"/></svg>
<span id="t67" class="t " style="top:267px;font-size:12px;color:#444;line-height:16px;left:600.3px;letter-spacing:-0.283px;">Guardar y cerrar</span>
<svg style="left:695px;top:268px;" width="18" height="18" viewBox="0 0 18 18"><g fill="#9563b3"><rect x="0" y="0" width="2.600" height="13.900" rx="0.600"/><rect x="11.300" y="0" width="2.600" height="13.9" rx="0.600"/><rect x="0" y="4.700" width="13.900" height="2"/><rect x="0" y="12.100" width="13.9" height="1.800" rx="0.600"/><rect x="4.200" y="0" width="5.700" height="3.800"/></g><rect x="7.900" y="0.900" width="1.200" height="2.100" fill="#f4f4f4"/></svg>
<svg style="left:721px;top:268px;" width="18" height="18" viewBox="0 0 18 18"><g fill="#9563b3"><rect x="0" y="0" width="2.600" height="13.900" rx="0.600"/><rect x="11.300" y="0" width="2.600" height="6.7" rx="0.600"/><rect x="0" y="4.700" width="13.900" height="2"/><rect x="0" y="12.100" width="6.8" height="1.800" rx="0.600"/><rect x="4.200" y="0" width="5.700" height="3.800"/></g><rect x="7.900" y="0.900" width="1.200" height="2.100" fill="#f4f4f4"/><rect x="8.800" y="7.500" width="6" height="7" fill="#fff" stroke="#777" stroke-width="0.900"/><rect x="7" y="6.500" width="3.500" height="4.500" fill="#f0f0f0"/><path d="M5 8.500h4.500M7.500 6.300l2.300 2.200-2.300 2.200" fill="none" stroke="#3a75b5" stroke-width="1.200"/></svg>
<svg style="left:747px;top:268px;" width="14" height="14" viewBox="0 0 14 14"><path d="M7 0v14M0 7h14" stroke="#3a75b5" stroke-width="2"/></svg>
<div style="left:770px;top:266px;width:1px;height:18px;background:#c8c8c8"></div>
<svg style="left:779px;top:267px;" width="16" height="16" viewBox="0 0 16 16"><path d="M1 1l14 14M15 1l-14 14" stroke="#d9603f" stroke-width="2.600"/></svg>
<div style="left:803px;top:266px;width:1px;height:18px;background:#c8c8c8"></div>
<svg style="left:814px;top:267px;" width="12" height="16" viewBox="0 0 12 16"><defs><linearGradient id="glk" x1="0" x2="1" y1="0" y2="0"><stop offset="0" stop-color="#ffd800"/><stop offset="0.500" stop-color="#d8a800"/><stop offset="1" stop-color="#ffe000"/></linearGradient></defs><path d="M3 7.500v-2.700a3 3 0 0 1 6 0v2.700" fill="none" stroke="#8c8c8c" stroke-width="1.500"/><rect x="1.600" y="7.300" width="8.900" height="7.200" fill="url(#glk)" stroke="#5a5a50" stroke-width="0.900"/></svg>
<div style="left:836px;top:266px;width:1px;height:18px;background:#c8c8c8"></div>
<svg style="left:845px;top:267px;" width="16" height="16" viewBox="0 0 16 16"><rect width="16" height="16" fill="#d9603f"/><path d="M3.500 3.500l9 9M12.500 3.500l-9 9" stroke="#fbeee9" stroke-width="2.600"/></svg>
<span id="t68" class="t " style="top:267px;font-size:12px;color:#444;line-height:16px;left:865.7px;letter-spacing:-0.503px;">Cerrar</span>
<div style="left:576px;top:311px;width:442px;height:368px;background:#fff;border:1px solid #dcdcdc"></div>
<div style="left:575px;top:290px;width:44px;height:22px;background:#fff;border:1px solid #dcdcdc;border-bottom:none"></div>
<div style="left:577px;top:291px;width:39px;height:20px;border:1px dotted #222"></div>
<span id="t69" class="t " style="top:292px;font-size:11px;color:#000;line-height:16px;left:582.5px;letter-spacing:-0.150px;">Datos</span>
<span id="t70" class="t " style="top:334.5px;font-size:11px;color:#000;line-height:16px;left:591px;letter-spacing:0.145px;">Tipo de lista:</span>
<div style="left:669px;top:333px;width:329px;height:19px;background:#f0f0f0;border:1px solid #adadad"></div>
<span id="t71" class="t " style="top:334px;font-size:11px;color:#8c8c8c;line-height:16px;left:672.5px;letter-spacing:-0.013px;">Método contacto preferido</span>
<span id="t72" class="t " style="top:370.7px;font-size:11px;color:#000;line-height:16px;left:591px;letter-spacing:0.047px;">Elementos de la lista:</span>
<div style="left:908px;top:366px;width:26px;height:26px;background:#f0f0f0;border:1px solid #adadad"></div>
<div style="left:940px;top:366px;width:26px;height:26px;background:#f0f0f0;border:1px solid #adadad"></div>
<div style="left:972px;top:366px;width:26px;height:26px;background:#f0f0f0;border:1px solid #adadad"></div>
<svg style="left:912px;top:370px;" width="18" height="18" viewBox="0 0 18 18"><circle cx="9" cy="9" r="7.600" fill="#6aaee6" stroke="#3a78c8" stroke-width="1"/><circle cx="9" cy="7.500" r="5.500" fill="#8cc4f0" opacity="0.700"/><path d="M9 4.300v9.400M4.300 9h9.400" stroke="#2f6fc0" stroke-width="4.200" stroke-linecap="round"/><path d="M9 5v8M5 9h8" stroke="#fff" stroke-width="2.200" stroke-linecap="round"/></svg>
<svg style="left:945px;top:370px;" width="18" height="18" viewBox="0 0 18 18"><rect x="2.500" y="1.500" width="10" height="12" fill="#e6ecfa" stroke="#8ea4dc" stroke-width="0.900"/><path d="M6.500 16l.8-3.200 7-6.800 2.300 2.300-7 6.800z" fill="#eab040" stroke="#b07a18" stroke-width="0.600"/><path d="M8.300 12.300l6-5.800" stroke="#fbe6a0" stroke-width="0.900"/><path d="M6.500 16l.6-2.200 1.600 1.600z" fill="#222"/></svg>
<svg style="left:977px;top:371px;" width="16" height="16" viewBox="0 0 16 16"><path d="M3.500 3.500l9 9M12.500 3.500l-9 9" stroke="#d2423a" stroke-width="3.800" stroke-linecap="round"/><path d="M3.800 3.500l8.700 8.700M12.200 3.500l-8.700 8.700" stroke="#ee8078" stroke-width="1.300" stroke-linecap="round"/></svg>
<div style="left:589px;top:396px;width:409px;height:229px;background:#fff;border:1px solid #ababab"></div>
<span id="t73" class="t " style="top:398.6px;font-size:11px;color:#000;line-height:16px;left:794.2px;transform:translateX(-50%);letter-spacing:-0.136px;">Elemento</span>
<div style="left:996px;top:397px;width:1px;height:20px;background:#d8d8d8"></div>
<svg style="left:594px;top:420px;" width="12" height="12" viewBox="0 0 12 12"><rect x="0" y="0" width="12" height="12" fill="#fff"/><path d="M0.500 0v11.500h11.500" fill="none" stroke="#2a2a68" stroke-width="1"/><path d="M1 0.500h10.500v10.500" fill="none" stroke="#9c9cd2" stroke-width="1"/><text x="5.700" y="10.800" font-size="11.500" fill="#5050c8" stroke="#5050c8" stroke-width="0.300" text-anchor="middle" font-family="Liberation Sans,sans-serif">A</text></svg>
<div style="left:590px;top:436px;width:407px;height:188px;background:#f3f3f3"></div>
<div style="left:590px;top:441px;width:407px;height:1px;background:#fff"></div>
<div style="left:590px;top:459px;width:407px;height:1px;background:#fff"></div>
<div style="left:590px;top:477px;width:407px;height:1px;background:#fff"></div>
<div style="left:590px;top:495px;width:407px;height:1px;background:#fff"></div>
<div style="left:590px;top:513px;width:407px;height:1px;background:#fff"></div>
<div style="left:590px;top:531px;width:407px;height:1px;background:#fff"></div>
<div style="left:590px;top:549px;width:407px;height:1px;background:#fff"></div>
<div style="left:590px;top:567px;width:407px;height:1px;background:#fff"></div>
<div style="left:590px;top:585px;width:407px;height:1px;background:#fff"></div>
<div style="left:590px;top:603px;width:407px;height:1px;background:#fff"></div>
<div style="left:590px;top:621px;width:407px;height:1px;background:#fff"></div>
<span id="t74" class="t " style="top:441.7px;font-size:11px;color:#000;line-height:16px;left:596px;letter-spacing:0.097px;">Teléfono personal</span>
<span id="t75" class="t " style="top:459.7px;font-size:11px;color:#000;line-height:16px;left:596px;letter-spacing:0.155px;">Teléfono móvil</span>
<span id="t76" class="t " style="top:477.7px;font-size:11px;color:#000;line-height:16px;left:596px;letter-spacing:0.107px;">Teléfono trabajo</span>
<span id="t77" class="t " style="top:495.7px;font-size:11px;color:#000;line-height:16px;left:596px;letter-spacing:-0.003px;">Email</span>
<span id="t78" class="t " style="top:513.7px;font-size:11px;color:#000;line-height:16px;left:596px;letter-spacing:-0.281px;">SMS</span>
<span id="t79" class="t " style="top:531.7px;font-size:11px;color:#000;line-height:16px;left:596px;letter-spacing:0.119px;">Otros</span>
<span id="t80" class="t " style="top:640.8px;font-size:11px;color:#000;line-height:16px;left:770.3px;letter-spacing:-0.122px;">Usar lista auxiliar en documentos tipo Word</span>
<div style="left:982px;top:642px;width:13px;height:13px;background:#fff;border:1px solid #8a8a8a"></div>
<svg style="left:984px;top:644px;" width="10" height="9" viewBox="0 0 10 9"><path d="M1 4.500l2.500 3 5.500-7" fill="none" stroke="#666" stroke-width="1.400"/></svg>
<svg style="left:40px;top:789px;" width="14" height="14" viewBox="0 0 14 14"><circle cx="8.500" cy="5.500" r="4.200" fill="#f4f8fc" stroke="#4a80ba" stroke-width="2"/><path d="M5.500 8.500l-4.500 4.500" stroke="#4a80ba" stroke-width="2.600" stroke-linecap="round"/></svg>
<span id="t81" class="t " style="top:787px;font-size:11px;color:#2b2b2b;line-height:16px;left:56.7px;letter-spacing:-0.214px;">Búsqueda de pacientes</span>
<svg style="left:189px;top:789px;" width="14" height="14" viewBox="0 0 14 14"><circle cx="8.500" cy="5.500" r="4.200" fill="#f4f8fc" stroke="#4a80ba" stroke-width="2"/><path d="M5.500 8.500l-4.500 4.500" stroke="#4a80ba" stroke-width="2.600" stroke-linecap="round"/></svg>
<span id="t82" class="t " style="top:787px;font-size:11px;color:#2b2b2b;line-height:16px;left:205.5px;letter-spacing:-0.142px;">Búsqueda de contactos</span>
<svg style="left:339px;top:788px;" width="13" height="15" viewBox="0 0 13 15"><circle cx="5" cy="2.500" r="2.200" fill="#333"/><path d="M2 5.500h4.500l1 4h3v2h-4.500l-1-2.500v5.500h-2.500z" fill="#333"/><path d="M1.500 9v5" stroke="#4a80ba" stroke-width="1.500"/><circle cx="10.500" cy="3" r="2.300" fill="#fff" stroke="#555" stroke-width="0.800"/><path d="M10.500 1.800v1.300h1" stroke="#555" stroke-width="0.600" fill="none"/></svg>
<span id="t83" class="t " style="top:787px;font-size:11px;color:#2b2b2b;line-height:16px;left:355.8px;letter-spacing:-0.287px;">Salas de espera</span>
<svg style="left:452px;top:788px;" width="13" height="16" viewBox="0 0 13 16"><path d="M2 1.500C1.500 7 10.500 8.500 10.800 12.500c.2 2-3.300 2.500-4.300 .8" fill="none" stroke="#444" stroke-width="1.400"/><path d="M11 1.500C11.500 7 3 8.500 2.300 12.300" fill="none" stroke="#444" stroke-width="1.400"/><circle cx="2.200" cy="13.300" r="1.700" fill="#333"/><circle cx="2" cy="1.300" r="1.100" fill="#3a75b5"/><circle cx="11" cy="1.300" r="1.100" fill="#3a75b5"/></svg>
<span id="t84" class="t " style="top:787px;font-size:11px;color:#2b2b2b;line-height:16px;left:470px;letter-spacing:-0.302px;">Consultas</span>
<div style="left:1px;top:806px;width:1235px;height:1px;background:#ababab"></div>
<div style="left:1px;top:827px;width:1235px;height:1px;background:#ababab"></div>
<div style="left:7px;top:807px;width:100px;height:20px;background:#f0f0f0;border-left:1px solid #c2c2c2;border-right:1px solid #c2c2c2"></div>
<div style="left:7px;top:807px;width:83px;height:20px;background:#fff;border-left:1px solid #c2c2c2;border-right:1px solid #c2c2c2"></div>
<svg style="left:95.0px;top:815px;" width="7" height="4" viewBox="0 0 7 4"><path d="M0 0h7l-3.500 4z" fill="#666"/></svg>
<div style="left:107px;top:807px;width:112px;height:20px;background:#f0f0f0;border-left:1px solid #c2c2c2;border-right:1px solid #c2c2c2"></div>
<div style="left:119px;top:807px;width:83px;height:20px;background:#fff;border-left:1px solid #c2c2c2;border-right:1px solid #c2c2c2"></div>
<svg style="left:207.0px;top:815px;" width="7" height="4" viewBox="0 0 7 4"><path d="M0 0h7l-3.500 4z" fill="#666"/></svg>
<span id="t85" class="t " style="top:809px;font-size:11px;color:#2b2b2b;line-height:16px;left:123px;letter-spacing:-0.328px;">Visita del día</span>
<div style="left:226px;top:809px;width:1px;height:17px;background:#d0d0d0"></div>
<svg style="left:234px;top:809px;" width="17" height="17" viewBox="0 0 17 17"><rect x="0" y="0" width="15.600" height="14.400" fill="#7d7d7d"/><rect x="1.1" y="3.3" width="2" height="1.900" fill="#f4f4f4"/><rect x="1.1" y="6.2" width="2" height="1.900" fill="#f4f4f4"/><rect x="1.1" y="9.1" width="2" height="1.900" fill="#f4f4f4"/><rect x="1.1" y="12" width="2" height="1.900" fill="#f4f4f4"/><rect x="4.1" y="3.3" width="2" height="1.900" fill="#f4f4f4"/><rect x="4.1" y="6.2" width="2" height="1.900" fill="#f4f4f4"/><rect x="4.1" y="9.1" width="2" height="1.900" fill="#f4f4f4"/><rect x="4.1" y="12" width="2" height="1.900" fill="#f4f4f4"/><rect x="7.1" y="3.3" width="2" height="1.900" fill="#f4f4f4"/><rect x="7.1" y="6.2" width="2" height="1.900" fill="#f4f4f4"/><rect x="7.1" y="9.1" width="2" height="1.900" fill="#f4f4f4"/><rect x="7.1" y="12" width="2" height="1.900" fill="#f4f4f4"/><rect x="10.1" y="3.3" width="2" height="1.900" fill="#f4f4f4"/><rect x="10.1" y="6.2" width="2" height="1.900" fill="#f4f4f4"/><rect x="10.1" y="9.1" width="2" height="1.900" fill="#f4f4f4"/><rect x="10.1" y="12" width="2" height="1.900" fill="#f4f4f4"/><rect x="13.1" y="3.3" width="2" height="1.900" fill="#f4f4f4"/><rect x="13.1" y="6.2" width="2" height="1.900" fill="#f4f4f4"/><rect x="13.1" y="9.1" width="2" height="1.900" fill="#f4f4f4"/><rect x="13.1" y="12" width="2" height="1.900" fill="#f4f4f4"/><rect x="3.100" y="5" width="3.400" height="3.400" fill="#f4f4f4" stroke="#d9603f" stroke-width="1.100"/><circle cx="11.600" cy="11.600" r="4.300" fill="#f0f0f0" stroke="#d9603f" stroke-width="1.200"/><path d="M11.600 9.300v2.500h2" fill="none" stroke="#777" stroke-width="1"/></svg>
<span id="t86" class="t " style="top:809px;font-size:11px;color:#2b2b2b;line-height:16px;left:255px;letter-spacing:-0.291px;">Agendas</span>
<svg style="left:301px;top:816px;" width="5" height="3" viewBox="0 0 5 3"><path d="M0 0h5l-2.500 3z" fill="#222"/></svg>
<div style="left:321px;top:807px;width:99px;height:20px;background:#f0f0f0;border-left:1px solid #c2c2c2;border-right:1px solid #c2c2c2"></div>
<div style="left:321px;top:807px;width:84px;height:20px;background:#fff;border-left:1px solid #c2c2c2;border-right:1px solid #c2c2c2"></div>
<svg style="left:409.0px;top:815px;" width="7" height="4" viewBox="0 0 7 4"><path d="M0 0h7l-3.500 4z" fill="#666"/></svg>
<div style="left:428px;top:809px;width:1px;height:17px;background:#d0d0d0"></div>
<svg style="left:436px;top:809px;" width="16" height="15" viewBox="0 0 16 15"><rect x="0" y="0" width="16" height="14.800" fill="#4a80ba"/><rect x="1.2" y="4" width="1.700" height="1.700" fill="#f4f8fc"/><rect x="1.2" y="6.75" width="1.700" height="1.700" fill="#f4f8fc"/><rect x="1.2" y="9.5" width="1.700" height="1.700" fill="#f4f8fc"/><rect x="1.2" y="12.25" width="1.700" height="1.700" fill="#f4f8fc"/><rect x="4.2" y="4" width="1.700" height="1.700" fill="#f4f8fc"/><rect x="4.2" y="6.75" width="1.700" height="1.700" fill="#f4f8fc"/><rect x="4.2" y="9.5" width="1.700" height="1.700" fill="#f4f8fc"/><rect x="4.2" y="12.25" width="1.700" height="1.700" fill="#f4f8fc"/><rect x="7.2" y="4" width="1.700" height="1.700" fill="#f4f8fc"/><rect x="7.2" y="6.75" width="1.700" height="1.700" fill="#f4f8fc"/><rect x="7.2" y="9.5" width="1.700" height="1.700" fill="#f4f8fc"/><rect x="7.2" y="12.25" width="1.700" height="1.700" fill="#f4f8fc"/><rect x="10.2" y="4" width="1.700" height="1.700" fill="#f4f8fc"/><rect x="10.2" y="6.75" width="1.700" height="1.700" fill="#f4f8fc"/><rect x="10.2" y="9.5" width="1.700" height="1.700" fill="#f4f8fc"/><rect x="10.2" y="12.25" width="1.700" height="1.700" fill="#f4f8fc"/><rect x="13.2" y="4" width="1.700" height="1.700" fill="#f4f8fc"/><rect x="13.2" y="6.75" width="1.700" height="1.700" fill="#f4f8fc"/><rect x="13.2" y="9.5" width="1.700" height="1.700" fill="#f4f8fc"/><rect x="13.2" y="12.25" width="1.700" height="1.700" fill="#f4f8fc"/></svg>
<span id="t87" class="t " style="top:809px;font-size:11px;color:#2b2b2b;line-height:16px;left:456.8px;letter-spacing:-0.253px;">Consolas de recepción</span>
<svg style="left:568px;top:816px;" width="5" height="3" viewBox="0 0 5 3"><path d="M0 0h5l-2.500 3z" fill="#222"/></svg>
<div style="left:588px;top:807px;width:99px;height:20px;background:#f0f0f0;border-left:1px solid #c2c2c2;border-right:1px solid #c2c2c2"></div>
<div style="left:588px;top:807px;width:83px;height:20px;background:#fff;border-left:1px solid #c2c2c2;border-right:1px solid #c2c2c2"></div>
<svg style="left:675.5px;top:815px;" width="7" height="4" viewBox="0 0 7 4"><path d="M0 0h7l-3.500 4z" fill="#666"/></svg>
<div style="left:695px;top:809px;width:1px;height:17px;background:#d0d0d0"></div>
<svg style="left:704px;top:810px;" width="13" height="13" viewBox="0 0 13 13"><path d="M0 0l6 6.500-6 6.500z" fill="#4a80ba"/><path d="M5.500 0l7 6.500-7 6.500 2.500-6.500z" fill="#4a80ba"/></svg>
<span id="t88" class="t " style="top:809px;font-size:11px;color:#2b2b2b;line-height:16px;left:723.8px;letter-spacing:-0.263px;">Visitas rápidas</span>
<svg style="left:804px;top:808px;" width="16" height="16" viewBox="0 0 16 16"><rect x="0.500" y="2.500" width="12" height="9" rx="1" fill="#fff" stroke="#7893d2"/><rect x="1" y="3" width="4" height="2.500" fill="#9fbbe6"/><path d="M0.500 5.700h12M0.500 8.700h12M4.700 2.500v9M8.700 2.500v9" stroke="#7893d2" stroke-width="0.900"/><path d="M6 15.900c0-3.400 1.800-4.700 5-4.700s5 1.300 5 4.700z" fill="#7ab52f"/><path d="M6.500 15.900c2 .2 7 .2 9 0" stroke="#4e8a1c" stroke-width="0.800" fill="none"/><ellipse cx="11" cy="8.300" rx="2.900" ry="3.200" fill="#c2722f"/><path d="M9.800 9.500c.3 1.600 2.100 1.600 2.400 0-.5-1-1.900-1-2.400 0z" fill="#f6dcae"/></svg>
<span id="t89" class="t " style="top:809px;font-size:11px;color:#2b2b2b;line-height:16px;left:824.6px;letter-spacing:-0.346px;">Revisión día</span>
<svg style="left:894px;top:810.5px;" width="16" height="13" viewBox="0 0 32 26"><g fill="none" stroke="#4a80ba" stroke-width="4.200"><path d="M9.600 6.400A9.100 9.100 0 0 1 25.100 12.200"/><path d="M6.900 13.400A9.100 9.100 0 0 0 22.400 19.200"/></g><path d="M0.500 13.800h13.800l-6.800-7.200z" fill="#4a80ba"/><path d="M17.400 12.100h14.100l-7.100 7.100z" fill="#4a80ba"/></svg>
<span id="t90" class="t " style="top:809px;font-size:11px;color:#2b2b2b;line-height:16px;left:914.5px;letter-spacing:-0.132px;">Refrescar</span>
<div style="left:969px;top:809px;width:1px;height:17px;background:#d0d0d0"></div>
<svg style="left:978px;top:808px;" width="14" height="17" viewBox="0 0 14 17"><path id="cuA" d="M1.300 10.600C0.800 6 4 3 8.200 3V1l4.300 3.400-4.300 3.400V6C6 6 4.300 7.500 4.200 9z" fill="#6aa58c"/><path d="M1.300 10.600C0.800 6 4 3 8.200 3V1l4.300 3.400-4.300 3.400V6C6 6 4.300 7.500 4.200 9z" fill="#3f7ab8" transform="rotate(180 7 8.450)"/></svg>
<span id="t91" class="t " style="top:809px;font-size:11px;color:#2b2b2b;line-height:16px;left:998px;letter-spacing:-0.314px;">Cambiar usuario</span>
<svg style="left:1087px;top:809px;" width="16" height="16" viewBox="0 0 16 16"><rect width="16" height="16" fill="#d9603f"/><path d="M3.500 3.500l9 9M12.500 3.500l-9 9" stroke="#fbeee9" stroke-width="2.600"/></svg>
<span id="t92" class="t " style="top:809px;font-size:11px;color:#2b2b2b;line-height:16px;left:1107.7px;letter-spacing:-0.583px;">Salir</span>
<div style="left:299px;top:829px;width:1px;height:18px;background:#cfcfcf"></div>
<div style="left:416px;top:829px;width:1px;height:18px;background:#cfcfcf"></div>
<div style="left:512px;top:829px;width:1px;height:18px;background:#cfcfcf"></div>
<div style="left:726px;top:829px;width:1px;height:18px;background:#cfcfcf"></div>
<div style="left:762px;top:829px;width:1px;height:18px;background:#cfcfcf"></div>
<div style="left:798px;top:829px;width:1px;height:18px;background:#cfcfcf"></div>
<div style="left:902px;top:829px;width:1px;height:18px;background:#cfcfcf"></div>
<div style="left:1036px;top:829px;width:1px;height:18px;background:#cfcfcf"></div>
<div style="left:1093px;top:829px;width:1px;height:18px;background:#cfcfcf"></div>
<div style="left:1164px;top:829px;width:1px;height:18px;background:#cfcfcf"></div>
<svg style="left:308px;top:830px;" width="15" height="15" viewBox="0 0 15 15"><path d="M1 8L7.500 2l6.500 6M3 7.500v6.500h9v-6.500" fill="#fff" stroke="#666" stroke-width="1.100"/><rect x="5.500" y="9" width="4" height="4" fill="#f0b84f" stroke="#b88a2f" stroke-width="0.600"/><rect x="11.500" y="0.500" width="1.600" height="4" fill="#2f6db5"/></svg>
<span id="t93" class="t " style="top:830px;font-size:11px;color:#2b2b2b;line-height:16px;left:327.3px;letter-spacing:-0.190px;">Delegación:</span>
<span id="t94" class="t " style="top:830px;font-size:11px;color:#2b2b2b;line-height:16px;left:389.7px;letter-spacing:-0.800px;">SEC</span>
<svg style="left:424px;top:831px;" width="16" height="14" viewBox="0 0 16 14"><circle cx="8" cy="4" r="3.600" fill="#7ab097"/><path d="M0.500 14c0-4.500 3-5.500 7.500-5.500s7.500 1 7.500 5.500z" fill="#7ab097"/><rect x="6.300" y="6.500" width="3.400" height="3" fill="#7ab097"/></svg>
<span id="t95" class="t " style="top:830px;font-size:11px;color:#2b2b2b;line-height:16px;left:444.8px;letter-spacing:-0.309px;">Usuario:</span>
<span id="t96" class="t " style="top:830px;font-size:11px;color:#2b2b2b;line-height:16px;left:493px;letter-spacing:-0.312px;">sa</span>
<svg style="left:520px;top:830px;" width="16" height="16" viewBox="0 0 16 16"><circle cx="8" cy="8" r="7.800" fill="#0c0c1c"/><rect x="2.500" y="3.500" width="7" height="5.500" fill="#1c3e8a" stroke="#e8e8f4" stroke-width="0.900"/><rect x="6.500" y="7" width="7" height="5.500" fill="#2a5fc0" stroke="#e8e8f4" stroke-width="0.900"/></svg>
<span id="t97" class="t " style="top:830px;font-size:11px;color:#2b2b2b;line-height:16px;left:540.6px;letter-spacing:-0.366px;">Modo Cliente (SERVIDOR\OFIMEDIC)</span>
<svg style="left:735px;top:830px;" width="16" height="16" viewBox="0 0 16 16"><path d="M0 1h14v14h-9v-5.300h-5z" fill="#eec370"/><path d="M0.300 11h3.500v3.500z" fill="#eec370"/><rect x="7" y="2.200" width="6" height="5.800" fill="#f4f6fa"/><path d="M7.700 7.500l1.500-1.500" stroke="#3a75b5" stroke-width="1.100"/><path d="M8.700 3.700l1.500-.3 2.200-2.900 2.700 2.700-2.900 2.200-.3 1.700z" fill="#3a75b5"/></svg>
<svg style="left:770px;top:832px;" width="15" height="11" viewBox="0 0 15 11"><rect width="15" height="11" fill="#9a9a9a"/><path d="M0 0l7.500 6 7.500-6M0 11l5.500-5.500M15 11l-5.500-5.500" fill="none" stroke="#d6d6d6" stroke-width="1"/></svg>
<svg style="left:807px;top:831px;" width="14" height="13" viewBox="0 0 14 13"><rect x="0.500" y="0.500" width="13" height="12" fill="#fff" stroke="#777"/><path d="M2 11l3-4 2.500 2.500 1.500-1.500 3 3z" fill="#5fa78a"/><circle cx="10" cy="4" r="1.200" fill="#eec26e"/></svg>
<span id="t98" class="t " style="top:830px;font-size:11px;color:#2b2b2b;line-height:16px;left:827.6px;letter-spacing:-0.227px;">508 Imágenes</span>
<svg style="left:910px;top:829px;" width="15" height="17" viewBox="0 0 15 17"><g fill="#eec26e"><ellipse cx="7.500" cy="3.200" rx="7" ry="3"/><path d="M0.500 5.500c1 2 4 2.600 7 2.600s6-.6 7-2.600v3c-1 2-4 2.600-7 2.600s-6-.6-7-2.600z"/><path d="M0.500 10.500c1 2 4 2.600 7 2.600s6-.6 7-2.600v3c-1 2-4 2.600-7 2.600s-6-.6-7-2.600z"/></g></svg>
<span id="t99" class="t " style="top:830px;font-size:11px;color:#2b2b2b;line-height:16px;left:931px;letter-spacing:-0.256px;">330,13 MB utilizados</span>
<span id="t100" class="t " style="top:830px;font-size:11px;color:#2b2b2b;line-height:16px;left:1043.8px;letter-spacing:0.295px;">v7.0.0.0</span>
<span id="t101" class="t " style="top:830px;font-size:11px;color:#2b2b2b;line-height:16px;left:1101px;letter-spacing:0.044px;">28/09/2018</span>
<span id="t102" class="t " style="top:830px;font-size:11px;color:#2b2b2b;line-height:16px;left:1172.8px;letter-spacing:-0.206px;">10:46</span>
<svg style="left:1225px;top:838px;" width="8" height="8" viewBox="0 0 8 8"><rect x="6" y="0" width="2" height="2" fill="#777"/><rect x="3" y="3" width="2" height="2" fill="#777"/><rect x="6" y="3" width="2" height="2" fill="#777"/><rect x="0" y="6" width="2" height="2" fill="#777"/><rect x="3" y="6" width="2" height="2" fill="#777"/><rect x="6" y="6" width="2" height="2" fill="#777"/></svg>
</body></html>
